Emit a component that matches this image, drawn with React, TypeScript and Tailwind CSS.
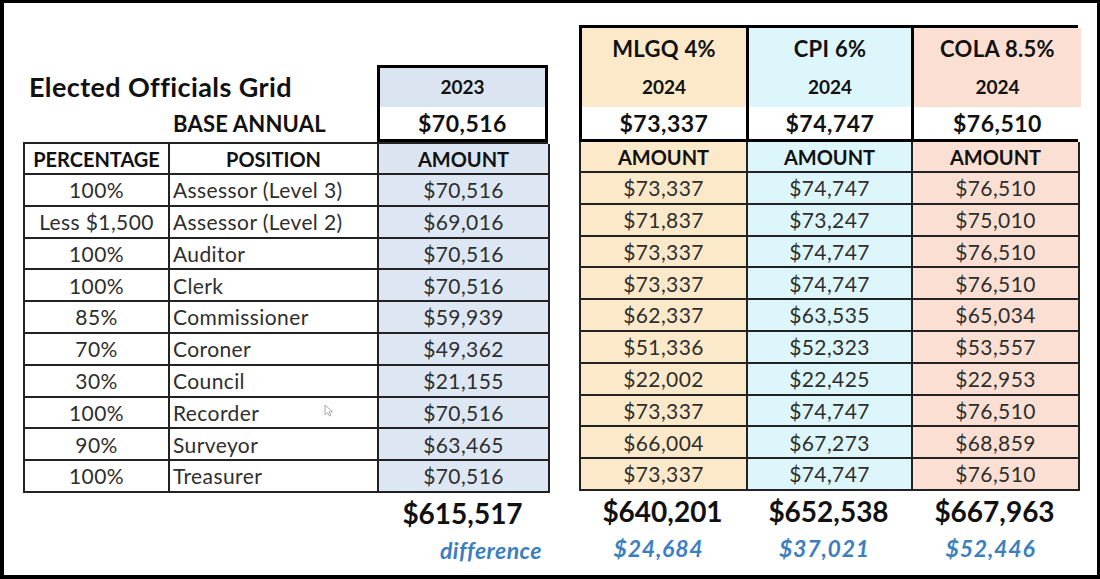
const rows = [
  { pct: "100%", pos: "Assessor (Level 3)", a: "$70,516", b: "$73,337", c: "$74,747", d: "$76,510" },
  { pct: "Less $1,500", pos: "Assessor (Level 2)", a: "$69,016", b: "$71,837", c: "$73,247", d: "$75,010" },
  { pct: "100%", pos: "Auditor", a: "$70,516", b: "$73,337", c: "$74,747", d: "$76,510" },
  { pct: "100%", pos: "Clerk", a: "$70,516", b: "$73,337", c: "$74,747", d: "$76,510" },
  { pct: "85%", pos: "Commissioner", a: "$59,939", b: "$62,337", c: "$63,535", d: "$65,034" },
  { pct: "70%", pos: "Coroner", a: "$49,362", b: "$51,336", c: "$52,323", d: "$53,557" },
  { pct: "30%", pos: "Council", a: "$21,155", b: "$22,002", c: "$22,425", d: "$22,953" },
  { pct: "100%", pos: "Recorder", a: "$70,516", b: "$73,337", c: "$74,747", d: "$76,510" },
  { pct: "90%", pos: "Surveyor", a: "$63,465", b: "$66,004", c: "$67,273", d: "$68,859" },
  { pct: "100%", pos: "Treasurer", a: "$70,516", b: "$73,337", c: "$74,747", d: "$76,510" },
];

const scenarios = [
  { name: "MLGQ 4%", base: "$73,337", total: "$640,201", diff: "$24,684", bg: "bg-[#fce9ca]", key: "b" as const },
  { name: "CPI 6%", base: "$74,747", total: "$652,538", diff: "$37,021", bg: "bg-[#ddf6fb]", key: "c" as const },
  { name: "COLA 8.5%", base: "$76,510", total: "$667,963", diff: "$52,446", bg: "bg-[#fbdfd3]", key: "d" as const },
];

const cell = "border-r-2 border-b-2 border-[#222] flex items-center";

function Cursor() {
  return (
    <svg className="absolute left-[154px] top-[6px]" width="10" height="13" viewBox="0 0 10 13">
      <path d="M1 1 L1 11 L3.5 8.5 L5.5 12 L7 11.2 L5 7.8 L8.5 7.8 Z" fill="#fff" stroke="#a8a8a8" strokeWidth="1" />
    </svg>
  );
}

export default function App() {
  return (
    <div
      className="w-[1100px] h-[579px] bg-black pt-[3px] pl-[4px] pr-[3px] pb-[4px]"
      style={{ fontFamily: "Lato, 'Open Sans', sans-serif" }}
    >
      <div className="w-full h-full bg-white pt-[22px] pl-[19px] flex gap-[31px] text-[#2e2e2e]">
        {/* left block: current year */}
        <div className="w-[525px] flex flex-col">
          <div className="h-[117px] flex">
            <div className="w-[354px] flex flex-col">
              <div className="h-[42px]" />
              <div className="h-[40px] flex items-center pl-[6px] text-[27px] tracking-[0.4px] font-bold text-[#111]">
                Elected Officials Grid
              </div>
              <div className="h-[32px] flex items-center pl-[150px] text-[22px] tracking-[0.2px] font-bold text-[#111]">
                BASE ANNUAL
              </div>
            </div>
            <div className="w-[171px] mt-[40px] h-[77px] border-[3px] border-black flex flex-col text-[#111] font-bold">
              <div className="h-[39px] bg-[#dbe5f2] flex items-center justify-center text-[19px]">2023</div>
              <div className="h-[32px] bg-white flex items-center justify-center text-[23px] tracking-[0.5px]">$70,516</div>
            </div>
          </div>
          <div className="grid grid-cols-[145px_209px_171px] border-l-2 border-t-2 border-[#222] text-[21px] tracking-[0.4px]">
            <div className={`${cell} h-[31px] justify-center font-bold text-[#111] text-[20px] tracking-normal`}>PERCENTAGE</div>
            <div className={`${cell} h-[31px] justify-center font-bold text-[#111] text-[20px] tracking-normal`}>POSITION</div>
            <div className={`${cell} h-[31px] justify-center font-bold text-[#111] text-[20px] tracking-normal bg-[#dbe5f2]`}>AMOUNT</div>
            {rows.map((r) => (
              <>
                <div key={r.pos + "p"} className={`${cell} h-[31.8px] justify-center`}>{r.pct}</div>
                <div key={r.pos + "n"} className={`${cell} h-[31.8px] pl-[3px] relative`}>
                  {r.pos}
                  {r.pos === "Recorder" && <Cursor />}
                </div>
                <div key={r.pos + "a"} className={`${cell} h-[31.8px] justify-center bg-[#dde7f3]`}>{r.a}</div>
              </>
            ))}
          </div>
          <div className="grid grid-cols-[145px_209px_171px]">
            <div />
            <div />
            <div className="flex flex-col">
              <div className="h-[40px] flex items-center justify-center text-[28px] font-bold text-[#111]">$615,517</div>
              <div className="h-[34px] flex items-center justify-end pr-[6px] text-[23px] tracking-[0.5px] font-bold italic text-[#3b7fc1]">
                difference
              </div>
            </div>
          </div>
        </div>

        {/* right block: 2024 scenarios */}
        <div className="w-[499px] flex flex-col">
          <div className="h-[117px] grid grid-cols-[167px_165px_167px] border-[3px] border-black text-[#111] font-bold">
            {scenarios.map((s, i) => (
              <div key={s.name} className={`flex flex-col ${i < 2 ? "border-r-[3px] border-black" : ""}`}>
                <div className={`h-[40px] ${s.bg} flex items-center justify-center text-[22px] tracking-[0.3px]`}>{s.name}</div>
                <div className={`h-[39px] ${s.bg} flex items-center justify-center text-[19px]`}>2024</div>
                <div className="h-[32px] bg-white flex items-center justify-center text-[23px] tracking-[0.5px]">{s.base}</div>
              </div>
            ))}
          </div>
          <div className="grid grid-cols-[167px_165px_167px] border-l-2 border-[#222] text-[21px] tracking-[0.4px]">
            {scenarios.map((s) => (
              <div key={s.name + "h"} className={`${cell} ${s.bg} h-[31px] justify-center font-bold text-[#111] text-[20px] tracking-normal`}>
                AMOUNT
              </div>
            ))}
            {rows.map((r) =>
              scenarios.map((s) => (
                <div key={r.pos + s.name} className={`${cell} ${s.bg} h-[31.8px] justify-center`}>
                  {r[s.key]}
                </div>
              ))
            )}
          </div>
          <div className="grid grid-cols-[167px_165px_167px]">
            {scenarios.map((s) => (
              <div key={s.name + "t"} className="h-[40px] flex items-center justify-center text-[28px] font-bold text-[#111]">
                {s.total}
              </div>
            ))}
            {scenarios.map((s) => (
              <div key={s.name + "d"} className="h-[34px] flex items-center justify-center pr-[8px] text-[23px] tracking-[0.8px] font-bold italic text-[#3b7fc1]">
                {s.diff}
              </div>
            ))}
          </div>
        </div>
      </div>
    </div>
  );
}
